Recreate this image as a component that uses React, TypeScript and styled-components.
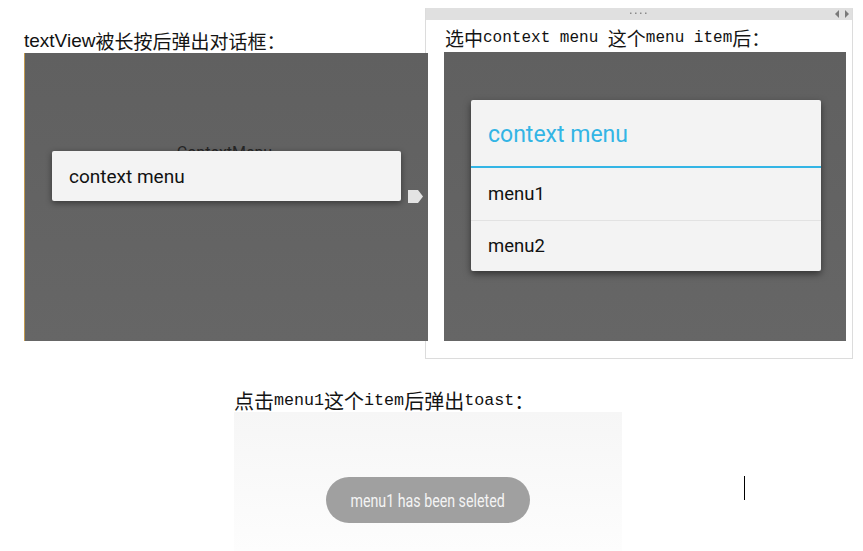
import React from "react";
import styled, { createGlobalStyle } from "styled-components";

const GlobalStyle = createGlobalStyle`
  html, body {
    margin: 0;
    padding: 0;
    background: #ffffff;
    overflow: hidden;
  }
`;

const CJK = `"Noto Sans CJK SC", sans-serif`;

export default function App() {
  return (
    <>
      <GlobalStyle />
      <Page>
        <TopRow>
          <LeftColumn>
            <Caption $height={23}>
              <SansWord>textView</SansWord>
              <Han>被长按后弹出对话框：</Han>
            </Caption>
            <Screen $width={404} $height={288} $edge="#c39a4e">
              <BackdropLabel>ContextMenu</BackdropLabel>
              <FloatingDialog>context menu</FloatingDialog>
              <NextArrow width="15" height="13" viewBox="0 0 15 13">
                <polygon points="0,0 10,0 15,6.5 10,13 0,13" fill="#e3e3e3" />
              </NextArrow>
            </Screen>
          </LeftColumn>

          <ShotPanel>
            <Toolbar>
              <GripDots width="18" height="3" viewBox="0 0 18 3">
                {[0, 5, 10, 15].map((x) => (
                  <rect key={x} x={x} y="0.5" width="1.5" height="1.5" fill="#8a8a8a" />
                ))}
              </GripDots>
              <PagerArrows width="14" height="8" viewBox="0 0 14 8">
                <polygon points="4,0 4,8 0,4" fill="#7a7a7a" />
                <polygon points="10,0 10,8 14,4" fill="#7a7a7a" />
              </PagerArrows>
            </Toolbar>
            <PanelCaption>
              <Han>选中</Han>
              <Mono $size={16}>context menu&nbsp;</Mono>
              <Han>这个</Han>
              <Mono $size={16}>menu item</Mono>
              <Han>后：</Han>
            </PanelCaption>
            <MenuScreen>
              <MenuDialog>
                <MenuHeader>context menu</MenuHeader>
                <MenuItem>menu1</MenuItem>
                <MenuItem $last>menu2</MenuItem>
              </MenuDialog>
            </MenuScreen>
          </ShotPanel>
        </TopRow>

        <BottomBlock>
          <Caption $height={24} $size={20}>
            <Han>点击</Han>
            <Mono $size={16.7}>menu1</Mono>
            <Han>这个</Han>
            <Mono $size={16.7}>item</Mono>
            <Han>后弹出</Han>
            <Mono $size={16.7}>toast</Mono>
            <Han>：</Han>
          </Caption>
          <ToastShot>
            <Toast>
              <ToastText>menu1 has been seleted</ToastText>
            </Toast>
          </ToastShot>
        </BottomBlock>

        <Caret />
      </Page>
    </>
  );
}

const Page = styled.div`
  position: relative;
  width: 863px;
  height: 551px;
  padding-left: 24px;
  box-sizing: border-box;
`;

const TopRow = styled.div`
  display: flex;
  align-items: flex-start;
`;

const LeftColumn = styled.div`
  display: flex;
  flex-direction: column;
  margin-top: 29px;
`;

const Caption = styled.div<{ $height: number; $size?: number }>`
  height: ${(p) => p.$height}px;
  display: flex;
  align-items: center;
  white-space: nowrap;
  font-size: ${(p) => p.$size ?? 19}px;
  color: #111;
`;

const SansWord = styled.span`
  font-family: "Liberation Sans", Arial, sans-serif;
  font-size: 19px;
  color: #111;
`;

const Han = styled.span`
  font-family: ${CJK};
  color: #141414;
`;

const Mono = styled.span<{ $size: number }>`
  font-family: "Liberation Mono", monospace;
  font-size: ${(p) => p.$size}px;
  color: #111;
`;

const Screen = styled.div<{ $width: number; $height: number; $edge?: string }>`
  position: relative;
  margin-top: 1px;
  width: ${(p) => p.$width}px;
  height: ${(p) => p.$height}px;
  box-sizing: border-box;
  border-left: 1px solid ${(p) => p.$edge ?? "transparent"};
  background: linear-gradient(#606060, #666666);
  display: flex;
  flex-direction: column;
  align-items: center;
`;

const BackdropLabel = styled.div`
  margin-top: 92px;
  width: 100%;
  padding-right: 4px;
  box-sizing: border-box;
  text-align: center;
  font-family: Roboto, sans-serif;
  font-size: 16px;
  line-height: 16px;
  color: #262626;
`;

const FloatingDialog = styled.div`
  position: absolute;
  left: 27px;
  top: 98px;
  width: 349px;
  height: 50px;
  box-sizing: border-box;
  padding-left: 17px;
  display: flex;
  align-items: center;
  background: #f3f3f3;
  border-radius: 2px;
  box-shadow: 0 2px 6px rgba(0, 0, 0, 0.45);
  font-family: Roboto, sans-serif;
  font-size: 19px;
  color: #111;
`;

const NextArrow = styled.svg`
  position: absolute;
  left: 383px;
  top: 137px;
`;

const ShotPanel = styled.div`
  margin-top: 8px;
  margin-left: -3px;
  width: 428px;
  height: 351px;
  box-sizing: border-box;
  border: 1px solid #dcdcdc;
  border-top-color: #e0e0e0;
  background: transparent;
  display: flex;
  flex-direction: column;
`;

const Toolbar = styled.div`
  position: relative;
  height: 11px;
  background: #e0e0e0;
  display: flex;
  align-items: center;
  justify-content: center;
`;

const GripDots = styled.svg`
  display: block;
  margin-top: -3px;
`;

const PagerArrows = styled.svg`
  position: absolute;
  right: 3px;
  top: 1px;
`;

const PanelCaption = styled.div`
  height: 32px;
  box-sizing: border-box;
  padding: 3px 0 0 19px;
  display: flex;
  align-items: center;
  white-space: nowrap;
  font-size: 19px;
`;

const MenuScreen = styled.div`
  margin-left: 18px;
  width: 402px;
  height: 289px;
  box-sizing: border-box;
  padding: 48px 25px 0 27px;
  background: linear-gradient(#606060, #666666);
`;

const MenuDialog = styled.div`
  background: #f3f3f3;
  border-radius: 2px;
  box-shadow: 0 3px 7px rgba(0, 0, 0, 0.5);
  font-family: Roboto, sans-serif;
`;

const MenuHeader = styled.div`
  height: 68px;
  box-sizing: border-box;
  padding: 2px 0 0 17px;
  display: flex;
  align-items: center;
  border-bottom: 2px solid #33b5e5;
  font-size: 23px;
  color: #33b5e5;
`;

const MenuItem = styled.div<{ $last?: boolean }>`
  height: ${(p) => (p.$last ? 50 : 53)}px;
  box-sizing: border-box;
  padding-left: 17px;
  display: flex;
  align-items: center;
  border-bottom: ${(p) => (p.$last ? "none" : "1px solid #e2e2e2")};
  font-size: 18.5px;
  color: #111;
`;

const BottomBlock = styled.div`
  margin-top: 29px;
  margin-left: 210px;
  display: flex;
  flex-direction: column;
  align-items: flex-start;
`;

const ToastShot = styled.div`
  width: 388px;
  height: 139px;
  box-sizing: border-box;
  padding-top: 65px;
  display: flex;
  justify-content: center;
  align-items: flex-start;
  background: linear-gradient(#f6f6f6, #fdfdfd);
`;

const Toast = styled.div`
  width: 204px;
  height: 46px;
  border-radius: 23px;
  background: #a0a0a0;
  display: flex;
  align-items: center;
  justify-content: center;
`;

const ToastText = styled.span`
  display: inline-block;
  font-family: Roboto, sans-serif;
  font-size: 18px;
  color: #f4f4f4;
  white-space: nowrap;
  transform: scaleX(0.79);
`;

const Caret = styled.div`
  position: absolute;
  left: 744px;
  top: 476px;
  width: 1px;
  height: 24px;
  background: #000;
`;
